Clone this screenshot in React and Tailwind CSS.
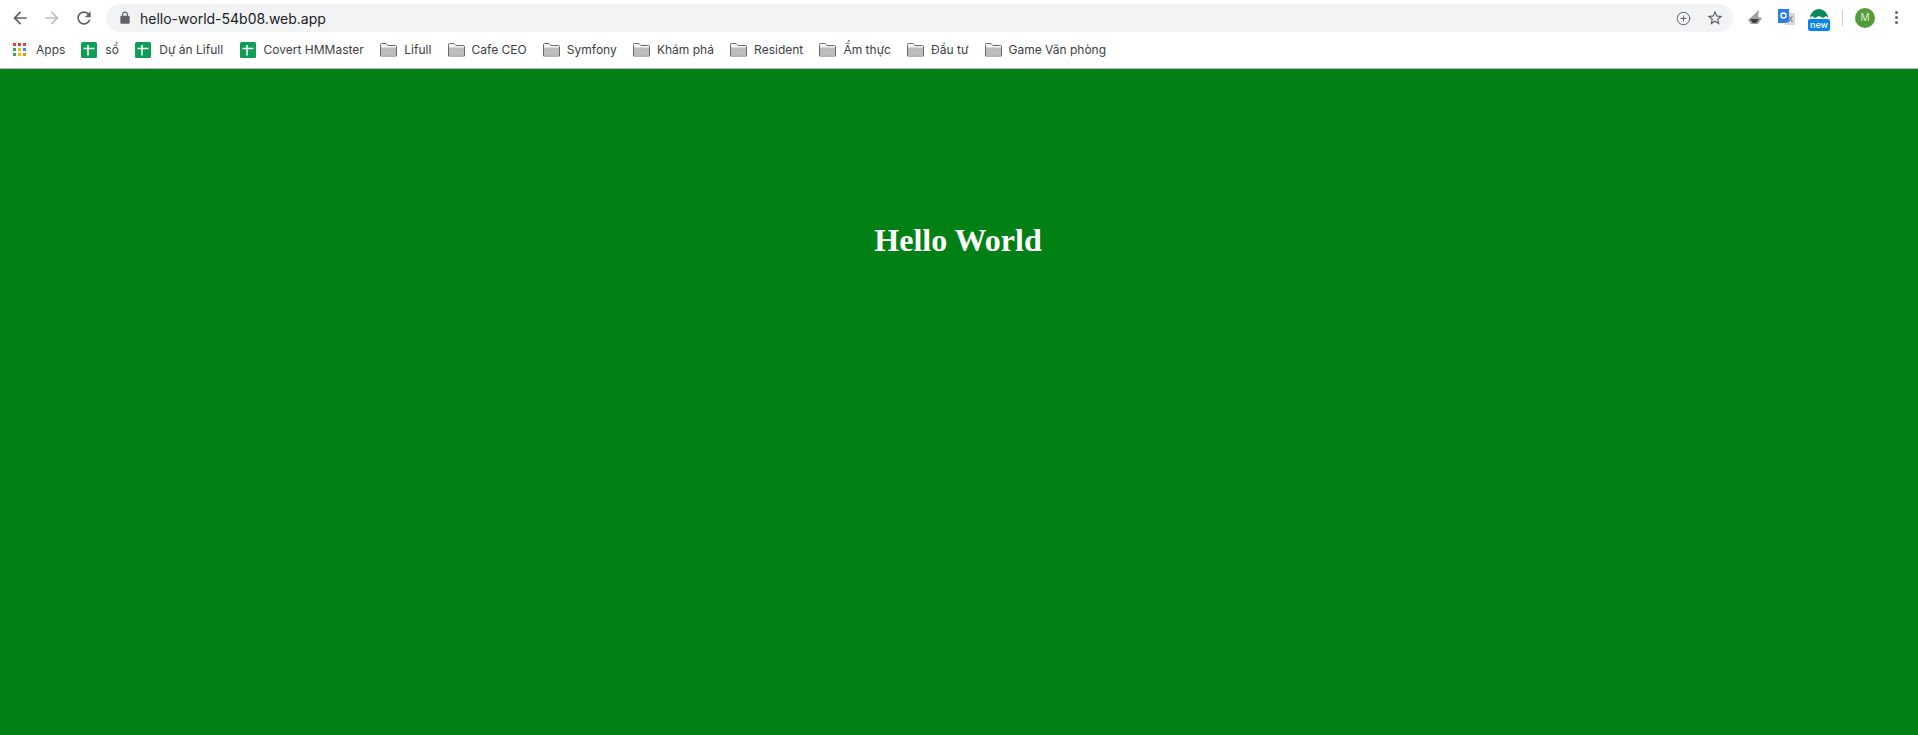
import { CirclePlus } from 'lucide-react';

const Sheet = () => (
    <svg width="16" height="16" viewBox="0 0 16 16" className="shrink-0">
        <rect width="16" height="16" rx="1.5" fill="#0f9d58" />
        <path d="M2.500 6.500h11M7 3v10.500" stroke="#fff" strokeWidth="1.500" fill="none" />
    </svg>
);

const Folder = () => (
    <svg width="17" height="14" viewBox="0 0 17 14" className="shrink-0">
        <path d="M.5 13V1.500a1 1 0 0 1 1-1h4.500l2 2h7.500a1 1 0 0 1 1 1V13z" fill="#f4f4f4" stroke="#6a6a6a" />
        <path d="M1 4.500h15V12.500H1z" fill="#bdbdbd" />
    </svg>
);

const AppsGrid = () => {
    const colors = ['#ea4335', '#ea4335', '#ea4335', '#34a853', '#fbbc05', '#4285f4', '#34a853', '#fbbc05', '#fb8c00'];
    return (
        <div className="grid grid-cols-3 gap-[2px] w-[13px] shrink-0">
            {colors.map((c, i) => (
                <div key={i} className="w-[3px] h-[3px]" style={{ background: c }} />
            ))}
        </div>
    );
};

const sheets = ['sổ', 'Dự án Lifull', 'Covert HMMaster'];
const folders = ['Lifull', 'Cafe CEO', 'Symfony', 'Khám phá', 'Resident', 'Ẩm thực', 'Đầu tư', 'Game Văn phòng'];

export default function App() {
    return (
        <div className="h-screen flex flex-col bg-white overflow-hidden font-['Inter','Liberation_Sans',sans-serif]">
            <div className="h-[35px] flex items-center shrink-0 pl-[10px] pr-[12px]">
                <svg width="20" height="20" viewBox="0 0 24 24" fill="#5f6368" className="shrink-0">
                    <path d="M20 11H7.830l5.590-5.590L12 4l-8 8 8 8 1.410-1.410L7.830 13H20v-2z" />
                </svg>
                <svg width="20" height="20" viewBox="0 0 24 24" fill="#bdc1c6" className="ml-[12px] shrink-0">
                    <path d="M12 4l-1.410 1.410L16.170 11H4v2h12.170l-5.580 5.590L12 20l8-8z" />
                </svg>
                <svg width="20" height="20" viewBox="0 0 24 24" fill="#5f6368" className="ml-[12px] shrink-0">
                    <path d="M17.650 6.350C16.200 4.900 14.210 4 12 4c-4.420 0-7.990 3.580-7.990 8s3.570 8 7.990 8c3.730 0 6.840-2.550 7.730-6h-2.080c-.82 2.330-3.040 4-5.650 4-3.310 0-6-2.690-6-6s2.690-6 6-6c1.660 0 3.140.69 4.220 1.780L13 11h7V4l-2.350 2.350z" />
                </svg>
                <div className="ml-[12px] h-[28px] w-[1627px] bg-[#f1f3f4] rounded-full flex items-center pl-[12px] pr-[9px] mt-[1px] shrink-0">
                    <svg width="14" height="14" viewBox="0 0 24 24" fill="#5f6368" className="shrink-0">
                        <path d="M18 8h-1V6c0-2.760-2.240-5-5-5S7 3.240 7 6v2H6c-1.100 0-2 .9-2 2v10c0 1.100.9 2 2 2h12c1.100 0 2-.9 2-2V10c0-1.100-.9-2-2-2zM8.900 6c0-1.710 1.390-3.100 3.100-3.100 1.710 0 3.100 1.390 3.100 3.100v2H8.900V6z" />
                    </svg>
                    <span className="ml-[8px] text-[14px] text-[#202124]">hello-world-54b08.web.app</span>
                    <CirclePlus size={15} strokeWidth={1.6} className="text-[#5f6368] ml-auto" />
                    <svg width="18" height="18" viewBox="0 0 24 24" fill="#5f6368" className="ml-[15px] shrink-0">
                        <path d="M22 9.240l-7.190-.62L12 2 9.190 8.630 2 9.240l5.460 4.730L5.820 21 12 17.270 18.180 21l-1.630-7.030L22 9.240zM12 15.400l-3.760 2.270 1-4.280-3.320-2.880 4.380-.38L12 6.100l1.710 4.040 4.380.38-3.320 2.880 1 4.280L12 15.400z" />
                    </svg>
                </div>
                <svg width="18" height="18" viewBox="0 0 18 18" className="ml-[13px] shrink-0">
                    <path d="M2 11 L13 1 L12 8 L16 9 L12 15 L5 15z" fill="#a0a0a0" />
                    <path d="M4 10h9l-3 4H7z" fill="#3f3f3f" />
                </svg>
                <svg width="17" height="18" viewBox="0 0 17 18" className="ml-[14px] shrink-0">
                    <rect x="7" y="4" width="10" height="12" fill="#d5d9df" />
                    <path d="M0 0h11v13l-4 1H0z" fill="#2a7de1" />
                    <circle cx="5.500" cy="6.500" r="2.500" fill="none" stroke="#fff" strokeWidth="1.400" />
                    <path d="M10.500 7l4 6M14.500 7l-4 6" stroke="#7b8794" strokeWidth="1.200" />
                </svg>
                <div className="ml-[13px] w-[22px] h-[24px] relative shrink-0 mt-[3px]">
                    <svg width="18" height="11" viewBox="0 0 18 11" className="absolute left-[2px] top-0">
                        <path d="M0 11a9 9 0 0 1 18 0l-2-2-3 2-4-2-4 2-3-2z" fill="#0b8a5a" />
                    </svg>
                    <div className="absolute left-0 bottom-0 w-[22px] h-[12px] bg-[#0a84e8] rounded-[2px] text-white text-[9px] leading-[12px] text-center font-medium">new</div>
                </div>
                <div className="ml-[12px] w-px h-[16px] bg-[#d0d0d0] shrink-0" />
                <div className="ml-[12px] w-[20px] h-[20px] rounded-full bg-[#559b3c] text-[#dcefd5] text-[10px] flex items-center justify-center shrink-0">M</div>
                <div className="ml-[20px] flex flex-col gap-[2px] shrink-0">
                    <div className="w-[3px] h-[3px] rounded-full bg-[#5f6368]" />
                    <div className="w-[3px] h-[3px] rounded-full bg-[#5f6368]" />
                    <div className="w-[3px] h-[3px] rounded-full bg-[#5f6368]" />
                </div>
            </div>

            <div className="h-[29px] flex items-center shrink-0 pl-[13px] pb-[4px] border-b border-[#b8b8b8] box-content text-[12px] text-[#3c4043] whitespace-nowrap">
                <div className="flex items-center gap-[10px] mr-[16px]">
                    <AppsGrid />
                    <span>Apps</span>
                </div>
                {sheets.map((name) => (
                    <div key={name} className="flex items-center gap-2 mr-[16.500px]">
                        <Sheet />
                        <span>{name}</span>
                    </div>
                ))}
                {folders.map((name) => (
                    <div key={name} className="flex items-center gap-[7px] mr-[16.200px]">
                        <Folder />
                        <span>{name}</span>
                    </div>
                ))}
            </div>

            <div className="flex-1 bg-[#008015] pt-[153px] pr-[2px] text-center">
                <h1 className="text-[32px] font-bold text-white leading-[37px] font-['Liberation_Serif',serif]">Hello World</h1>
            </div>
        </div>
    );
}
